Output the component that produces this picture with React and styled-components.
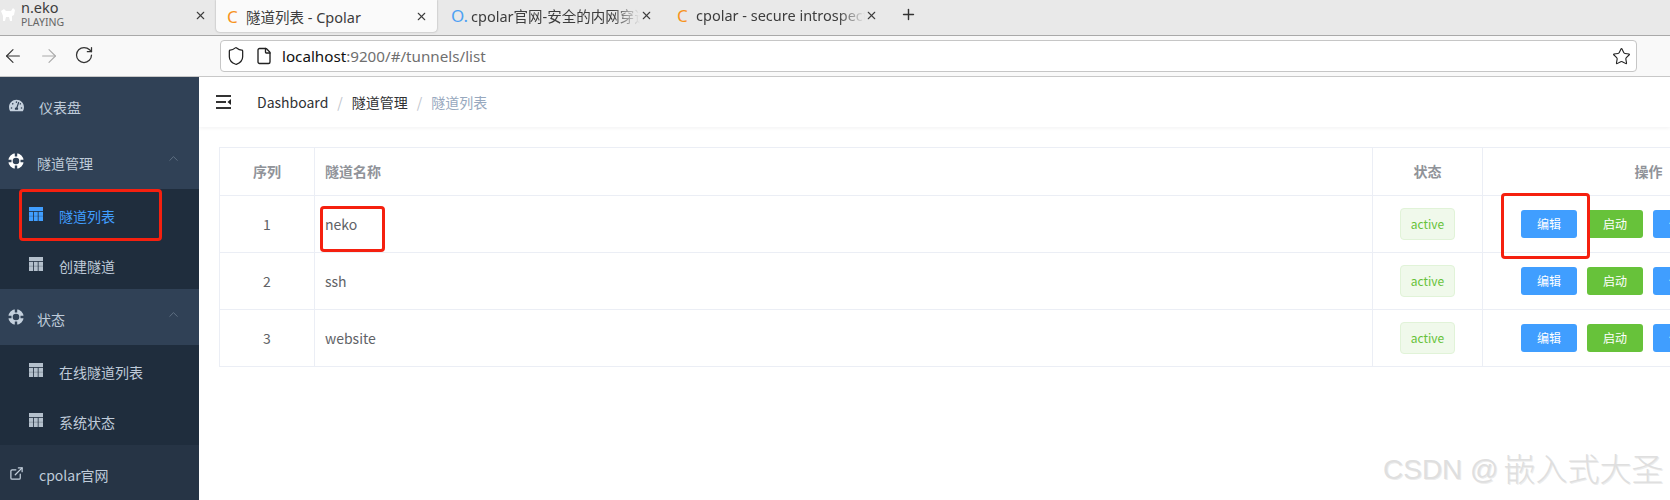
import React from "react"
import styled, { createGlobalStyle } from "styled-components"
import { ArrowLeft, ArrowRight, RotateCw, Shield, File, Star, X, Plus, ChevronUp } from "lucide-react"
import { FaTachometerAlt } from "react-icons/fa"
import { FiExternalLink } from "react-icons/fi"

const GlobalStyle = createGlobalStyle`
  html, body {
    margin: 0;
    padding: 0;
    width: 1670px;
    height: 500px;
    overflow: hidden;
    background: #fff;
    font-family: "Noto Sans CJK SC", "Noto Sans", sans-serif;
  }
  * { box-sizing: border-box; }
`

const Page = styled.div`
  position: relative;
  width: 1670px;
  height: 500px;
  overflow: hidden;
  display: flex;
  flex-direction: column;
`

const TabBar = styled.div`
  height: 36px;
  flex: none;
  display: flex;
  background: #e9e9e9;
  border-bottom: 1px solid #a9a9a9;
  font-family: "Noto Sans", "Noto Sans CJK SC", sans-serif;
  color: #3d3d3d;
`

const Tab = styled.div`
  flex: none;
  width: ${p => p.$width}px;
  height: ${p => (p.$active ? 32 : 30)}px;
  padding-left: ${p => p.$pad}px;
  padding-right: 9px;
  display: flex;
  align-items: center;
  font-size: 14.5px;
  background: ${p => (p.$active ? "#fafafa" : "transparent")};
  border-radius: ${p => (p.$active ? "0 0 4px 4px" : "0")};
  box-shadow: ${p => (p.$active ? "0 0 2px rgba(0,0,0,.35)" : "none")};
`

const Favicon = styled.span`
  flex: none;
  width: ${p => p.$width || 19}px;
  color: ${p => p.$color};
  font-size: 17px;
  line-height: 1;
`

const TabTitle = styled.span`
  flex: 1;
  min-width: 0;
  white-space: nowrap;
  overflow: hidden;
  -webkit-mask-image: ${p => (p.$fade ? "linear-gradient(90deg, #000 84%, transparent 100%)" : "none")};
  mask-image: ${p => (p.$fade ? "linear-gradient(90deg, #000 84%, transparent 100%)" : "none")};
`

const PlayingTitle = styled.div`
  flex: 1;
  display: flex;
  flex-direction: column;
  line-height: 15px;
  font-size: 14.5px;
  margin-top: -1px;
  & > small {
    font-size: 10.5px;
    color: #666;
  }
`

const NewTab = styled.div`
  margin-left: 13px;
  height: 28px;
  display: flex;
  align-items: center;
  color: #333;
`

const Toolbar = styled.div`
  height: 41px;
  flex: none;
  display: flex;
  align-items: center;
  padding: 0 33px 0 2px;
  background: #f9f9f9;
  border-bottom: 1px solid #c8c8c8;
`

const NavButtons = styled.div`
  flex: none;
  display: flex;
  gap: 14px;
  width: 218px;
  color: #333;
  & > svg:nth-child(2) { color: #aaa; }
`

const UrlBox = styled.div`
  flex: 1;
  height: 32px;
  display: flex;
  align-items: center;
  padding: 0 5px;
  background: #fff;
  border: 1px solid #c6c6c6;
  border-radius: 4px;
  color: #222;
`

const PageIcon = styled(File)`
  margin-left: 9px;
`

const UrlText = styled.div`
  flex: 1;
  margin-left: 9px;
  font-family: "Noto Sans", sans-serif;
  font-size: 15.2px;
  color: #6f6f6f;
  & > b { font-weight: 400; color: #111; }
`

const Body = styled.div`
  flex: 1;
  min-height: 0;
  display: flex;
`

const Sidebar = styled.aside`
  flex: none;
  width: 199px;
  background: #263445;
  color: #bfcbd9;
  font-size: 14px;
`

const MenuItem = styled.div`
  position: relative;
  height: 56px;
  display: flex;
  align-items: center;
  padding: 4px 0 0 ${p => p.$pad || 9}px;
  background: ${p => p.$bg || "#304156"};
`

const MenuIcon = styled.span`
  flex: none;
  width: ${p => p.$width}px;
  display: flex;
  margin-top: -4px;
  font-size: 15px;
  color: ${p => p.$color || "#c4d0dd"};
`

const Chevron = styled.span`
  position: absolute;
  right: 18px;
  top: 18px;
  display: flex;
  color: #7a8a9c;
`

const SubMenu = styled.div`
  background: #1f2d3d;
`

const SubItem = styled.div`
  position: relative;
  height: 50px;
  display: flex;
  align-items: center;
  padding: 4px 0 0 29px;
  color: ${p => (p.$active ? "#409eff" : "#bfcbd9")};
`

const Highlight = styled.div`
  position: absolute;
  left: ${p => p.$left}px;
  top: ${p => p.$top}px;
  width: ${p => p.$width}px;
  height: ${p => p.$height}px;
  border: 3px solid #f5200f;
  border-radius: 4px;
  pointer-events: none;
`

const Main = styled.main`
  flex: 1;
  min-width: 0;
  overflow: hidden;
`

const Navbar = styled.header`
  height: 50px;
  display: flex;
  align-items: center;
  padding-left: 17px;
  box-shadow: 0 1px 4px rgba(0, 21, 41, 0.06);
  font-size: 14px;
`

const Hamburger = styled.svg`
  flex: none;
  margin-right: 26px;
`

const Crumb = styled.span`
  color: ${p => (p.$last ? "#97a8be" : "#303133")};
`

const CrumbSep = styled.span`
  margin: 0 9px;
  color: #c0c4cc;
`

const Content = styled.div`
  padding: 20px 0 0 20px;
`

const Table = styled.table`
  width: 1595px;
  table-layout: fixed;
  border-collapse: collapse;
  font-size: 14px;
  color: #606266;
`

const Th = styled.th`
  height: 48px;
  padding: 0 10px 2px;
  border: 1px solid #ebeef5;
  color: #909399;
  font-weight: 700;
  text-align: ${p => p.$align || "center"};
`

const Td = styled.td`
  position: relative;
  height: 57px;
  padding: 0 10px 1px;
  border: 1px solid #ebeef5;
  text-align: ${p => p.$align || "center"};
`

const StatusTag = styled.span`
  display: inline-flex;
  align-items: center;
  justify-content: center;
  width: 55px;
  height: 32px;
  margin-top: 1px;
  padding-bottom: 2px;
  font-size: 12px;
  color: #67c23a;
  background: #f0f9eb;
  border: 1px solid #e1f3d8;
  border-radius: 4px;
`

const Actions = styled.div`
  display: flex;
  gap: 10px;
  margin-top: 1px;
  padding-left: 28px;
`

const ActionButton = styled.button`
  flex: none;
  width: 56px;
  height: 28px;
  padding: 0 0 2px;
  border: 0;
  border-radius: 3px;
  font-family: inherit;
  font-size: 12px;
  color: #fff;
  background: ${p => (p.$kind === "success" ? "#67c23a" : "#409eff")};
`

const Watermark = styled.div`
  position: absolute;
  left: 1383px;
  top: 449px;
  display: flex;
  align-items: center;
  font-family: "Liberation Sans", "Noto Sans CJK SC", sans-serif;
  font-size: 32px;
  font-weight: 300;
  line-height: 42px;
  white-space: nowrap;
  color: #dfdfdf;
  text-shadow: 1px 1px 0 #ececec;
  & > span { font-size: 28px; margin-right: 5px; }
`

const CatIcon = () => (
  <svg width="14" height="16" viewBox="0 0 14 16" fill="#fff">
    <path d="M0 5 L3 3 L5 5 L10 5 L12 2 L14 4 L13 9 L11 10 L11 15 L9 15 L8 11 L5 11 L4 15 L2 15 L2 10 Z" />
  </svg>
)

const RingIcon = ({ color }) => (
  <svg width="16" height="16" viewBox="0 0 16 16">
    <circle cx="8" cy="8" r="5.5" fill="none" stroke={color} strokeWidth="4.4" />
    <path d="M8 0V3.5M8 12.5V16M0 8H3.5M12.5 8H16" stroke="#304156" strokeWidth="2.4" />
  </svg>
)

const TableIcon = ({ color }) => (
  <svg width="14" height="14" viewBox="0 0 14 14">
    <rect width="14" height="14" fill={color} />
    <path d="M0 4.5H14M4.5 4.5V14M9.2 4.5V14" stroke="#1f2d3d" strokeWidth="0.8" fill="none" />
    <path d="M0 9.2H14" stroke="#1f2d3d" strokeWidth="0.5" opacity="0.5" fill="none" />
  </svg>
)

const rows = [
  { id: 1, name: "neko" },
  { id: 2, name: "ssh" },
  { id: 3, name: "website" },
]

const App = () => (
  <Page>
    <GlobalStyle />
    <TabBar>
      <Tab $width={216} $pad={1}>
        <Favicon $width={20}><CatIcon /></Favicon>
        <PlayingTitle>n.eko<small>PLAYING</small></PlayingTitle>
        <X size={13} />
      </Tab>
      <Tab $active $width={221} $pad={11}>
        <Favicon $color="#f7941d">C</Favicon>
        <TabTitle>隧道列表 - Cpolar</TabTitle>
        <X size={13} />
      </Tab>
      <Tab $width={225} $pad={14}>
        <Favicon $color="#4ea1f3" $width={20}>O.</Favicon>
        <TabTitle $fade>cpolar官网-安全的内网穿透工具</TabTitle>
        <X size={13} />
      </Tab>
      <Tab $width={225} $pad={15}>
        <Favicon $color="#f7941d">C</Favicon>
        <TabTitle $fade>cpolar - secure introspectable</TabTitle>
        <X size={13} />
      </Tab>
      <NewTab><Plus size={17} /></NewTab>
    </TabBar>

    <Toolbar>
      <NavButtons>
        <ArrowLeft size={22} strokeWidth={1.2} />
        <ArrowRight size={22} strokeWidth={1.2} />
        <RotateCw size={20} strokeWidth={1.5} />
      </NavButtons>
      <UrlBox>
        <Shield size={20} strokeWidth={1.5} />
        <PageIcon size={18} strokeWidth={1.8} />
        <UrlText><b>localhost</b>:9200/#/tunnels/list</UrlText>
        <Star size={19} strokeWidth={1.4} />
      </UrlBox>
    </Toolbar>

    <Body>
      <Sidebar>
        <MenuItem>
          <MenuIcon $width={30}><FaTachometerAlt /></MenuIcon>
          仪表盘
        </MenuItem>
        <MenuItem $pad={8}>
          <MenuIcon $width={29}><RingIcon color="#fff" /></MenuIcon>
          隧道管理
          <Chevron><ChevronUp size={15} strokeWidth={1} /></Chevron>
        </MenuItem>
        <SubMenu>
          <SubItem $active>
            <MenuIcon $width={30}><TableIcon color="#409eff" /></MenuIcon>
            隧道列表
            <Highlight $left={19} $top={0} $width={143} $height={52} />
          </SubItem>
          <SubItem>
            <MenuIcon $width={30}><TableIcon color="#b4c0cc" /></MenuIcon>
            创建隧道
          </SubItem>
        </SubMenu>
        <MenuItem $pad={8}>
          <MenuIcon $width={29}><RingIcon color="#c4d0dd" /></MenuIcon>
          状态
          <Chevron><ChevronUp size={15} strokeWidth={1} /></Chevron>
        </MenuItem>
        <SubMenu>
          <SubItem>
            <MenuIcon $width={30}><TableIcon color="#b4c0cc" /></MenuIcon>
            在线隧道列表
          </SubItem>
          <SubItem>
            <MenuIcon $width={30}><TableIcon color="#b4c0cc" /></MenuIcon>
            系统状态
          </SubItem>
        </SubMenu>
        <MenuItem $bg="#263445">
          <MenuIcon $width={30}><FiExternalLink /></MenuIcon>
          cpolar官网
        </MenuItem>
      </Sidebar>

      <Main>
        <Navbar>
          <Hamburger width="15" height="14" viewBox="0 0 15 14">
            <path d="M0 1H15M0 7H10M0 13H15" stroke="#333" strokeWidth="1.8" fill="none" />
            <path d="M15 4V10L11.5 7Z" fill="#222" />
          </Hamburger>
          <Crumb>Dashboard</Crumb>
          <CrumbSep>/</CrumbSep>
          <Crumb>隧道管理</Crumb>
          <CrumbSep>/</CrumbSep>
          <Crumb $last>隧道列表</Crumb>
        </Navbar>
        <Content>
          <Table>
            <colgroup>
              <col width="95" />
              <col width="1058" />
              <col width="110" />
              <col width="332" />
            </colgroup>
            <thead>
              <tr>
                <Th>序列</Th>
                <Th $align="left">隧道名称</Th>
                <Th>状态</Th>
                <Th>操作</Th>
              </tr>
            </thead>
            <tbody>
              {rows.map(row => (
                <tr key={row.id}>
                  <Td>{row.id}</Td>
                  <Td $align="left">
                    {row.name}
                    {row.id === 1 && <Highlight $left={5} $top={10} $width={65} $height={46} />}
                  </Td>
                  <Td><StatusTag>active</StatusTag></Td>
                  <Td>
                    <Actions>
                      <ActionButton>编辑</ActionButton>
                      <ActionButton $kind="success">启动</ActionButton>
                      <ActionButton>停止</ActionButton>
                    </Actions>
                    {row.id === 1 && <Highlight $left={18} $top={-3} $width={89} $height={66} />}
                  </Td>
                </tr>
              ))}
            </tbody>
          </Table>
        </Content>
      </Main>
    </Body>
    <Watermark><span>CSDN @</span>嵌入式大圣</Watermark>
  </Page>
)

export default App
